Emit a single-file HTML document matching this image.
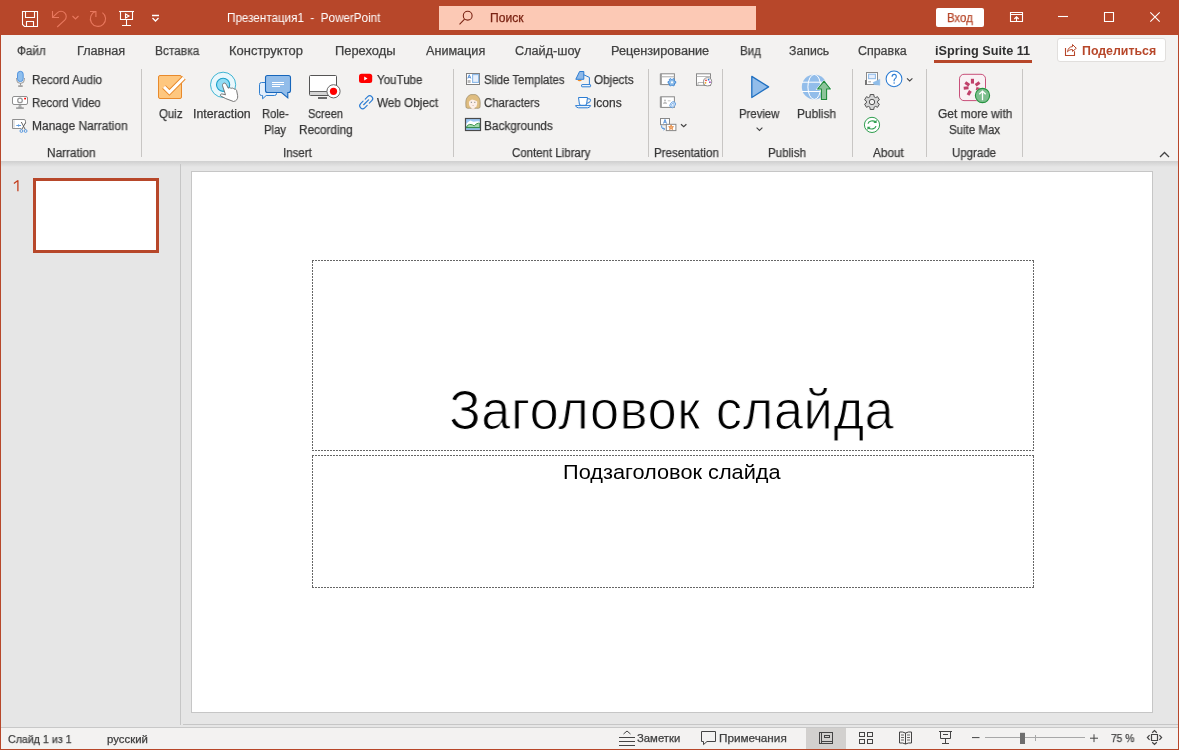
<!DOCTYPE html>
<html><head><meta charset="utf-8">
<style>
*{margin:0;padding:0;box-sizing:border-box}
html,body{width:1179px;height:750px;overflow:hidden}
body{position:relative;background:#b7472a;font-family:"Liberation Sans",sans-serif}
.a{position:absolute}
.t{position:absolute;white-space:pre;transform-origin:0 0;will-change:transform;font-family:"Liberation Sans",sans-serif}
svg{position:absolute;overflow:visible}
</style></head><body>
<!-- ribbon bg -->
<div class="a" style="left:1px;top:35px;width:1177px;height:126px;background:#f3f2f1"></div>
<!-- work area -->
<div class="a" style="left:1px;top:161px;width:1177px;height:566px;background:#e6e6e6"></div>
<div class="a" style="left:1px;top:161px;width:1177px;height:6px;background:linear-gradient(#cfcfcf,#e6e6e6)"></div>
<!-- thumb divider -->
<div class="a" style="left:180px;top:164px;width:1px;height:561px;background:#c6c6c6"></div>
<!-- slide -->
<div class="a" style="left:191px;top:171px;width:962px;height:542px;background:#fff;border:1px solid #c6c6c6"></div>
<div class="a" style="left:183px;top:724px;width:995px;height:1px;background:#c6c6c6"></div>
<!-- placeholders -->
<svg style="left:0;top:0" width="1179" height="750" fill="none"><g stroke="#666" stroke-width="1" stroke-dasharray="2 1"><path d="M312 260.5 H1034 M312 450.5 H1034 M312.5 261 V451 M1033.5 261 V451 M312 455.5 H1034 M312 587.5 H1034 M312.5 456 V588 M1033.5 456 V588"/></g></svg>

<!-- thumbnail -->
<div class="a" style="left:33px;top:178px;width:126px;height:75px;border:3px solid #b7472a;background:#fff"></div>
<!-- status bar -->
<div class="a" style="left:1px;top:727px;width:1177px;height:1px;background:#c8c8c8"></div>
<div class="a" style="left:1px;top:728px;width:1177px;height:21px;background:#f3f2f1"></div>
<div class="a" style="left:806px;top:728px;width:40px;height:21px;background:#d2d0ce"></div>
<!-- search -->
<div class="a" style="left:439px;top:6px;width:317px;height:24px;background:#fcc9b5"></div>
<!-- Вход -->
<div class="a" style="left:936px;top:8px;width:48px;height:19px;background:#fff;border-radius:2px"></div>
<!-- share button -->
<div class="a" style="left:1057px;top:38px;width:109px;height:24px;background:#fff;border:1px solid #e1dfdd;border-radius:3px"></div>
<!-- tab underline -->
<div class="a" style="left:934px;top:60px;width:98px;height:3px;background:#b7472a"></div>
<!-- separators -->
<div class="a" style="left:141px;top:69px;width:1px;height:88px;background:#c8c6c4"></div>
<div class="a" style="left:453px;top:69px;width:1px;height:88px;background:#c8c6c4"></div>
<div class="a" style="left:648px;top:69px;width:1px;height:88px;background:#c8c6c4"></div>
<div class="a" style="left:722px;top:69px;width:1px;height:88px;background:#c8c6c4"></div>
<div class="a" style="left:852px;top:69px;width:1px;height:88px;background:#c8c6c4"></div>
<div class="a" style="left:926px;top:69px;width:1px;height:88px;background:#c8c6c4"></div>
<div class="a" style="left:1022px;top:69px;width:1px;height:88px;background:#c8c6c4"></div>
<!--ICONS--><svg style="left:0;top:0" width="1179" height="750" viewBox="0 0 1179 750" fill="none">
<!-- title bar -->
<g stroke="#fff" stroke-width="1.1">
 <path d="M22.5 11.5 H37.5 V26.5 H24.5 L22.5 24.5 Z"/>
 <path d="M25.5 11.5 V17.5 H34.5 V11.5"/>
 <path d="M26.5 26.5 V21.5 H33.5 V26.5"/>
 <path d="M119 11.5 H134"/>
 <path d="M120.5 11.5 V19.5 H132.5 V11.5"/>
 <path d="M125.5 14 V18 L129 16 Z"/>
 <path d="M126.5 19.5 V25.5 M122 25.5 H131"/>
 <path d="M152 15.5 H159 M152.5 18 L155.5 21 L158.5 18" stroke-width="1.3"/>
 <path d="M1010.5 12.5 H1022.5 V21.5 H1010.5 Z M1010.5 14.5 H1022.5 M1016.5 21.5 V16.8 M1014.3 19 L1016.5 16.8 L1018.7 19"/>
 <path d="M1058 16.5 H1068"/>
 <path d="M1104.5 12.5 H1113.5 V21.5 H1104.5 Z"/>
 <path d="M1150.3 12.3 L1159.7 21.7 M1159.7 12.3 L1150.3 21.7"/>
</g>
<g stroke="#e8785e" stroke-width="1.1">
 <path d="M52.5 11 V17.5 H59"/>
 <path d="M52.8 17.2 L57.3 12.8 A5.2 5.2 0 0 1 64.7 20.2 L57.2 27"/>
 <path d="M72.5 16 L75.5 19 L78.5 16"/>
 <path d="M90 11.5 H95.9 V17"/>
 <path d="M95.5 11.6 A7.6 7.6 0 1 0 102.4 12.6"/>
</g>
<!-- search -->
<g stroke="#7a2414" stroke-width="1.1">
 <circle cx="467.7" cy="15.7" r="4.4"/>
 <path d="M459.5 24.3 L464.6 19.2"/>
</g>
<!-- share -->
<g stroke="#b7472a" stroke-width="1.1">
 <path d="M1065.5 48 V55.5 H1074.5 V51.3"/>
 <path d="M1067.5 51.8 C1068 48.3 1070 46.6 1072.5 46.6 V44.5 L1076.3 48.3 L1072.5 51.4 V49.6 C1070.5 49.4 1069 50.1 1067.5 51.8 Z" stroke-width="1"/>
</g>
<!-- collapse -->
<path d="M1160 157 L1164.5 152.5 L1169 157" stroke="#444" stroke-width="1.3"/>

<!-- Narration icons -->
<g>
 <path d="M16.6 78 V79.5 A3.5 3.5 0 0 0 24.4 79.5 V78" stroke="#999" stroke-width="1"/>
 <path d="M20.5 83 V85.5" stroke="#999" stroke-width="1"/>
 <rect x="18.2" y="85.3" width="4.5" height="1.6" fill="#999"/>
 <rect x="17.5" y="71.3" width="5.7" height="10.3" rx="2.85" fill="#8fbfee" stroke="#4a8fdc" stroke-width="0.9"/>
 <rect x="12.5" y="96.5" width="15" height="8" rx="1.5" fill="#fff" stroke="#8f8f8f" stroke-width="1"/>
 <circle cx="20" cy="100.4" r="2.3" fill="#fff" stroke="#999" stroke-width="1.3"/>
 <rect x="24.2" y="97.8" width="1.8" height="1.6" fill="#f00"/>
 <path d="M19.3 105 L18.6 107.5 H21.4 L20.7 105 Z" fill="#bbb" stroke="#999" stroke-width="0.6"/>
 <rect x="16.1" y="107.4" width="7.7" height="1.4" fill="#8f8f8f"/>
 <rect x="13" y="120" width="12" height="8" fill="#fff"/>
 <path d="M25.5 123.5 V121 Q25.5 119.5 24 119.5 H12.5 V128.5 H21.2" stroke="#8f8f8f" stroke-width="1"/>
 <rect x="13.2" y="120.2" width="1.6" height="7.6" fill="#ddd"/>
 <path d="M16.3 125.5 H21 M18.6 124.3 V126.7" stroke="#5c9be0" stroke-width="1"/>
 <path d="M21.3 122 L25.3 129.6 M25.6 122.6 L21.7 129.6" stroke="#555" stroke-width="0.9"/>
 <circle cx="21.4" cy="131" r="1.4" stroke="#5c9be0" stroke-width="1"/>
 <circle cx="25.6" cy="131" r="1.4" stroke="#5c9be0" stroke-width="1"/>
</g>
<!-- Quiz -->
<rect x="158.5" y="75.5" width="23" height="23" rx="1.5" fill="#fec77f" stroke="#e88a2c" stroke-width="1"/>
<path d="M164 86.9 L169.4 92.3 L183.9 77.8" stroke="#e88a2c" stroke-width="5" stroke-linejoin="miter" stroke-linecap="butt"/>
<path d="M164 86.9 L169.4 92.3 L183.9 77.8" stroke="#fff" stroke-width="3" stroke-linecap="butt"/>
<!-- Interaction -->
<circle cx="223.1" cy="84.8" r="12.6" fill="#e9f7fc" stroke="#3fb5d3" stroke-width="1"/>
<circle cx="223.1" cy="84.8" r="6.6" fill="#92dcf4" stroke="#1ba0c9" stroke-width="1.1"/>
<path d="M223.2 83.5 C224.5 82.5 225.8 83.3 226.5 84.8 L228.2 88.2 C229.2 87.3 230.2 87.6 231 88.5 C232 87.7 233.5 88 234.1 89.2 C235 88.8 236.2 89.3 236.6 90.5 L237.6 95.5 C238 97.5 237.3 99.8 235.6 100.8 L233.5 101.5 L225.8 98.6 L220.8 96 C220 95.3 220.5 93.8 221.8 93.9 L225.5 94.8 L222.6 86 C222.3 85 222.6 84 223.2 83.5 Z" fill="#fff" stroke="#6a6a6a" stroke-width="0.9"/>
<!-- Role-Play -->
<path d="M261.5 82.5 H274.5 Q276.5 82.5 276.5 84.5 V93.5 Q276.5 95.5 274.5 95.5 H266.2 L262.6 98.8 V95.5 H261.5 Q259.5 95.5 259.5 93.5 V84.5 Q259.5 82.5 261.5 82.5 Z" fill="#e4effb" stroke="#2f7fd0" stroke-width="1"/>
<path d="M267.5 75.5 H288.5 Q290.5 75.5 290.5 77.5 V90.5 Q290.5 92.5 288.5 92.5 H287.8 V97.8 L281.5 92.5 H267.5 Q265.5 92.5 265.5 90.5 V77.5 Q265.5 75.5 267.5 75.5 Z" fill="#92bdea" stroke="#1766bb" stroke-width="1.1"/>
<path d="M272 82.5 H284 M272 84.5 H284 M272 86.5 H280" stroke="#fff" stroke-width="1"/>
<!-- Screen Recording -->
<rect x="309.5" y="75.5" width="27" height="20" rx="1" fill="#fff" stroke="#555" stroke-width="1"/>
<rect x="310" y="91.5" width="26" height="3.5" fill="#d5d5d5"/>
<path d="M310 91.5 H336" stroke="#666" stroke-width="1"/>
<rect x="318" y="97" width="9" height="2" fill="#6a6a6a"/>
<circle cx="333.5" cy="91.3" r="6.6" fill="#fff" stroke="#666" stroke-width="1"/>
<circle cx="333.5" cy="91.3" r="3.6" fill="#f00"/>
<!-- YouTube -->
<rect x="359" y="73.8" width="13.2" height="9.3" rx="2.5" fill="#f00"/>
<path d="M364.2 76.6 V80.4 L367.5 78.5 Z" fill="#fff"/>
<!-- link -->
<g transform="translate(366.2 102.2) rotate(-45)" stroke="#2b7cd3" stroke-width="1.15" fill="none" stroke-linecap="round">
 <path d="M1.5 -2.9 H5 A2.9 2.9 0 0 1 5 2.9 H1.5"/>
 <path d="M-1.5 2.9 H-5 A2.9 2.9 0 0 1 -5 -2.9 H-1.5"/>
 <path d="M-3.6 0 H3.4"/>
</g>
<!-- Slide templates -->
<rect x="466.5" y="73.5" width="13" height="11" fill="#fff" stroke="#808080" stroke-width="1"/>
<rect x="472.6" y="74.6" width="6" height="7.8" fill="#e8f0fc" stroke="#8ab8e8" stroke-width="1.1"/>
<path d="M467.8 78.5 L469.3 74.8 L470.8 78.5 M468.3 77.3 H470.3" stroke="#3a7ed0" stroke-width="0.8"/>
<rect x="467.6" y="80" width="3" height="3" fill="#bbb"/>
<!-- Characters -->
<path d="M470.8 94.6 H475.4 Q477.5 95 479.2 98 Q480.3 100 480.2 103 L480 107.5 Q478.5 108.6 476.5 108.3 H469.5 Q467.5 108.6 466 107.5 L465.8 103 Q465.7 100 466.8 98 Q468.5 95 470.8 94.6 Z" fill="#dfbd80" stroke="#9a8a6a" stroke-width="0.7"/>
<path d="M471.5 108 V109.6 H474.5 V108 Z" fill="#f5e2d8"/>
<path d="M472 99.5 Q475 99.8 477.2 101.5 Q477.5 104 476.5 106.2 Q475 108.3 473 108.3 Q470.6 108.2 469.5 106 Q468.6 104 469 101.8 Q469.8 100.5 472 99.5 Z" fill="#fcefe8"/>
<path d="M470.8 102.3 h1.2 M474.2 102.3 h1.2" stroke="#888" stroke-width="1"/>
<path d="M472.5 105.5 h1.2" stroke="#c9a9a0" stroke-width="0.7"/>
<!-- Backgrounds -->
<rect x="465.5" y="118.5" width="15" height="12" fill="#9cc8f5"/>
<path d="M466.2 126 V123.8 Q468 121.8 470.5 120.4 Q472 121.2 473.6 121.7 Q476.5 120.9 479.8 121.4 V126 Z" fill="#fff"/>
<path d="M466.4 127.6 Q467.2 124.6 469.6 124.4 Q472.4 124.3 474.3 125.9 Q476 123.3 478.5 123.2 Q479.4 123.2 479.8 123.4 V127.6 Z" fill="#a3d8ab" stroke="#2e8b45" stroke-width="0.9"/>
<path d="M466 127.9 H480" stroke="#2e8b45" stroke-width="1"/>
<rect x="466" y="128.4" width="14" height="1.8" fill="#96c3f5"/>
<rect x="465.5" y="118.5" width="15" height="12" fill="none" stroke="#4a4a4a" stroke-width="1.2"/>
<!-- Objects lamp -->
<path d="M575.8 79.3 L579.6 71.5 H583.8 V79.3 Z" fill="#8db8e8" stroke="#2b7cd3" stroke-width="1" stroke-linejoin="round"/>
<path d="M577.5 80 A2.2 1.6 0 0 0 581.8 80 Z" fill="#f08a24"/>
<path d="M583.8 74.8 L589.4 77.4 V84.8" stroke="#2b7cd3" stroke-width="1"/>
<rect x="581.6" y="84.6" width="9" height="2.2" rx="0.5" fill="#fff" stroke="#2b7cd3" stroke-width="1"/>
<!-- Icons cup -->
<path d="M578.5 97.5 H587.5 L586.6 104 Q586.3 105.3 585 105.3 H581 Q579.7 105.3 579.4 104 Z" fill="#fff" stroke="#2b7cd3" stroke-width="1"/>
<path d="M587.3 98.8 H589 Q590.6 98.8 590.6 100.3 Q590.6 102.6 586.8 103.4" stroke="#2b7cd3" stroke-width="1"/>
<path d="M575.5 105.6 H590.6 Q589.8 107.8 587.5 107.8 H578.6 Q576.3 107.8 575.5 105.6 Z" fill="#fff" stroke="#2b7cd3" stroke-width="1"/>
<!-- Presentation icons -->
<g>
 <rect x="660.8" y="73.8" width="13.6" height="10.8" fill="#fff" stroke="#888" stroke-width="1"/>
 <path d="M660.8 73.8 V84.6" stroke="#999" stroke-width="2"/>
 <path d="M661 76.8 H674.4" stroke="#aaa" stroke-width="1"/>
 <path d="M674.61 81.28 L675.71 81.45 L675.71 83.15 L674.61 83.32 L674.14 84.14 L674.54 85.17 L673.07 86.02 L672.37 85.16 L671.43 85.16 L670.73 86.02 L669.26 85.17 L669.66 84.14 L669.19 83.32 L668.09 83.15 L668.09 81.45 L669.19 81.28 L669.66 80.46 L669.26 79.43 L670.73 78.58 L671.43 79.44 L672.37 79.44 L673.07 78.58 L674.54 79.43 L674.14 80.46 Z" fill="#8fbde9" stroke="#3b86d6" stroke-width="0.9" stroke-linejoin="round"/>
 <circle cx="672" cy="82.3" r="1.1" fill="#fff"/>
 <rect x="696.5" y="73.8" width="14" height="11.6" fill="#fff" stroke="#888" stroke-width="1"/>
 <path d="M696.5 76.5 H710.5 M698 82.5 H703.5 V85.4 H698 Z" stroke="#aaa" stroke-width="0.8"/>
 <circle cx="707.6" cy="81.8" r="4.1" fill="#fff" stroke="#777" stroke-width="0.8"/>
 <circle cx="706" cy="80.3" r="0.9" fill="#e33"/>
 <circle cx="708.6" cy="79.7" r="0.9" fill="#2a7ad0"/>
 <circle cx="709.9" cy="82.2" r="0.9" fill="#a040c0"/>
 <circle cx="705.5" cy="82.8" r="0.9" fill="#f0a020"/>
 <rect x="660.8" y="96.8" width="13.6" height="10.6" fill="#fff" stroke="#888" stroke-width="1"/>
 <path d="M660.8 96.8 V107.4" stroke="#999" stroke-width="2"/>
 <circle cx="665" cy="100.4" r="1" fill="#bbb"/>
 <path d="M663.3 103.3 Q665 101.3 666.8 103.3 Z M667.8 100.8 H670.5" stroke="#bbb" stroke-width="0.9" fill="#bbb"/>
 <ellipse cx="672.7" cy="104.7" rx="2.4" ry="3.3" transform="rotate(40 672.7 104.7)" fill="#fff" stroke="#4a90dc" stroke-width="0.8"/>
 <ellipse cx="672.7" cy="104.7" rx="1" ry="2" transform="rotate(40 672.7 104.7)" stroke="#4a90dc" stroke-width="0.6"/>
 <rect x="660.5" y="118.5" width="9" height="6.2" fill="#fff" stroke="#888" stroke-width="1"/>
 <path d="M663.5 123.5 L665 119.5 L666.5 123.5 M664 122.2 H666" stroke="#3a7ed0" stroke-width="0.8"/>
 <rect x="666.3" y="124.3" width="9.6" height="6.3" fill="#fff" stroke="#888" stroke-width="1"/>
 <path d="M671.10 124.90 L671.75 126.61 L673.57 126.70 L672.15 127.84 L672.63 129.60 L671.10 128.60 L669.57 129.60 L670.05 127.84 L668.63 126.70 L670.45 126.61 Z" fill="#f3b27a" stroke="#e0782a" stroke-width="0.7" stroke-linejoin="round"/>
 <path d="M661.5 125.5 Q661 129 664.5 129 M663.5 128 L664.7 129 L663.5 130" stroke="#3b86d6" stroke-width="0.9"/>
 <path d="M681 124.3 L683.7 126.8 L686.4 124.3" stroke="#444" stroke-width="1.2"/>
</g>
<!-- Preview -->
<path d="M751.8 76.4 L768.6 86.9 L751.8 97.5 Z" fill="#92bdea" stroke="#1f6fc0" stroke-width="1.3" stroke-linejoin="round"/>
<path d="M756.6 127.6 L759.5 130.5 L762.4 127.6" stroke="#444" stroke-width="1.1"/>
<!-- Publish -->
<circle cx="814.3" cy="86.9" r="12.5" fill="#92bdea"/>
<ellipse cx="814.3" cy="86.9" rx="6.4" ry="12.5" stroke="#fff" stroke-width="1"/>
<path d="M801.8 82.2 H826.8 M801.8 91.5 H826.8" stroke="#fff" stroke-width="1"/>
<path d="M824 79.8 L832.3 89.8 H827.3 V100.3 H820.7 V89.8 H815.7 Z" fill="#fff"/>
<path d="M824 81.2 L830.4 89 H826.6 V99.5 H821.4 V89 H817.6 Z" fill="#8cc49a" stroke="#1e8a3a" stroke-width="1.1" stroke-linejoin="round"/>
<!-- About icons -->
<rect x="866.5" y="72.5" width="11" height="12" fill="#fff" stroke="#8a8a8a" stroke-width="1"/>
<path d="M865.8 80 V85" stroke="#666" stroke-width="1.4"/>
<rect x="868.6" y="74.2" width="6.8" height="4.5" fill="#e6eefc" stroke="#8ab8e8" stroke-width="1"/>
<path d="M868.3 81.8 H871" stroke="#aaa" stroke-width="1.2"/>
<path d="M873 82.6 L879.8 79.3 V85.2 L874 84.4 Z" fill="#8fbde9" stroke="#8fbde9" stroke-width="0.5"/>
<circle cx="894" cy="78.9" r="7.9" fill="#fff" stroke="#2b7cd3" stroke-width="1.05"/>
<path d="M907 78.3 L909.7 80.9 L912.4 78.3" stroke="#444" stroke-width="1.1"/>
<path d="M869.99 96.67 L870.17 94.52 L873.83 94.52 L874.01 96.67 L875.62 97.59 L877.56 96.68 L879.39 99.85 L877.62 101.07 L877.62 102.93 L879.39 104.15 L877.56 107.32 L875.62 106.41 L874.01 107.33 L873.83 109.48 L870.17 109.48 L869.99 107.33 L868.38 106.41 L866.44 107.32 L864.61 104.15 L866.38 102.93 L866.38 101.07 L864.61 99.85 L866.44 96.68 L868.38 97.59 Z" fill="#d6d6d6" stroke="#555" stroke-width="1" stroke-linejoin="round"/>
<circle cx="872" cy="102" r="2.7" fill="#f3f2f1" stroke="#555" stroke-width="1"/>
<circle cx="872" cy="124.9" r="7.6" fill="#fff" stroke="#2e9e4e" stroke-width="1"/>
<path d="M868 123.6 C868.8 120.8 873 120 875.6 121.8" stroke="#2e9e4e" stroke-width="1.2"/>
<path d="M876.6 119.8 V123 H873.4 Z" fill="#2e9e4e"/>
<path d="M876 126.2 C875.2 129 871 129.8 868.4 128" stroke="#2e9e4e" stroke-width="1.2"/>
<path d="M867.4 130 V126.8 H870.6 Z" fill="#2e9e4e"/>
<path d="M892.1 76.7 Q892.1 74.4 894.2 74.4 Q896.3 74.4 896.3 76.4 Q896.3 77.7 895.1 78.6 Q894.1 79.4 894.1 80.6 V81.2" stroke="#2b7cd3" stroke-width="1.1"/>
<circle cx="894.1" cy="83.1" r="0.75" fill="#2b7cd3"/>
<!-- Upgrade -->
<rect x="959.5" y="74.3" width="26" height="26.3" rx="4.5" fill="#f9f1f4" stroke="#c8507a" stroke-width="1"/>
<g fill="#c0406a">
 <rect x="970.9" y="78.8" width="3.1" height="4.8" transform="rotate(0 972.4 87.5)"/>
 <rect x="970.9" y="78.8" width="3.1" height="4.8" transform="rotate(55 972.4 87.5)"/>
 <rect x="970.9" y="78.8" width="3.1" height="4.8" transform="rotate(-55 972.4 87.5)"/>
 <rect x="970.9" y="78.8" width="3.1" height="4.8" transform="rotate(-95 972.4 87.5)"/>
 <rect x="970.9" y="78.8" width="3.1" height="4.8" transform="rotate(-150 972.4 87.5)"/>
 <rect x="970.9" y="78.8" width="3.1" height="4.8" transform="rotate(105 972.4 87.5)"/>
</g>
<circle cx="982.5" cy="95.5" r="7.8" fill="#f3f2f1"/>
<circle cx="982.5" cy="95.5" r="7.1" fill="#7dbe8e" stroke="#24933f" stroke-width="1.1"/>
<path d="M982.5 100.3 V91.3 M979.3 94.3 L982.5 91.1 L985.7 94.3" stroke="#fff" stroke-width="1.3"/>
<path d="M17.9 180.3 V191.2 M17.9 180.6 L13.9 183.6" stroke="#c43e1c" stroke-width="1.3"/>
<!-- status bar icons -->
<g stroke="#444" stroke-width="1">
 <path d="M619 737.5 H635 M619 741.5 H635 M619 745.5 H635"/>
 <path d="M623.5 734 L627 731 L630.5 734"/>
 <path d="M701.5 731.5 H715.5 V741.5 H707 L703.5 744.6 V741.5 H701.5 Z"/>
 <rect x="819.5" y="732.5" width="13" height="11"/>
 <path d="M821.5 732.5 V743.5 M821.5 741.5 H832.5"/>
 <rect x="824.5" y="735.5" width="5" height="2"/>
 <rect x="859.5" y="732.5" width="5" height="4"/>
 <rect x="867.5" y="732.5" width="5" height="4"/>
 <rect x="859.5" y="739.5" width="5" height="4"/>
 <rect x="867.5" y="739.5" width="5" height="4"/>
 <path d="M905.5 733 Q902.5 731.5 899.5 732 V743 Q902.5 742.5 905.5 744 Q908.5 742.5 911.5 743 V732 Q908.5 731.5 905.5 733 Z M905.5 733 V744"/>
 <path d="M901 735 H904 M901 737.5 H904 M901 740 H904 M907 735 H910 M907 737.5 H910 M907 740 H910" stroke-width="0.8"/>
 <path d="M939 731.5 H952 M940.5 731.5 V738.5 H950.5 V731.5 M945.5 738.5 V743.5 M942 743.5 H949 M943 734.5 H948"/>
 <path d="M972 737.6 H979.5"/>
 <path d="M1090 738.2 H1098 M1094 734.3 V742.1"/>
 <path d="M1151.5 734.5 H1157.5 V740.5 H1151.5 Z" stroke-width="1.2"/>
 <path d="M1152.2 732.8 L1154.5 730.6 L1156.8 732.8 M1152.2 742.2 L1154.5 744.4 L1156.8 742.2 M1149.6 735.2 L1147.4 737.5 L1149.6 739.8 M1159.4 735.2 L1161.6 737.5 L1159.4 739.8" stroke-width="1.2"/>
</g>
<path d="M985 737.5 H1085" stroke="#a8a8a8" stroke-width="1"/>
<path d="M1035.5 735 V741" stroke="#a8a8a8" stroke-width="1"/>
<rect x="1020" y="732.8" width="5" height="11.2" fill="#6e6e6e"/>
</svg>
<!--/ICONS-->
<div class="t" style="left:226.80px;top:11.84px;font-size:12px;line-height:12px;color:#ffffff;font-weight:normal;transform:scaleX(0.9715);letter-spacing:0px;">Презентация1&nbsp;&nbsp;-&nbsp;&nbsp;PowerPoint</div>
<div class="t" style="left:489.80px;top:11.84px;font-size:12px;line-height:12px;color:#7a2414;font-weight:normal;transform:scaleX(1.0058);letter-spacing:0px;-webkit-text-stroke:0.25px #7a2414;">Поиск</div>
<div class="t" style="left:947.00px;top:11.84px;font-size:12px;line-height:12px;color:#b7472a;font-weight:normal;transform:scaleX(0.9468);letter-spacing:0px;-webkit-text-stroke:0.25px #b7472a;">Вход</div>
<div class="t" style="left:17.00px;top:44.54px;font-size:12px;line-height:12px;color:#424242;font-weight:normal;transform:scaleX(0.9763);letter-spacing:0px;-webkit-text-stroke:0.25px #424242;">Файл</div>
<div class="t" style="left:77.00px;top:44.54px;font-size:12px;line-height:12px;color:#424242;font-weight:normal;transform:scaleX(1.0559);letter-spacing:0px;-webkit-text-stroke:0.25px #424242;">Главная</div>
<div class="t" style="left:155.20px;top:44.54px;font-size:12px;line-height:12px;color:#424242;font-weight:normal;transform:scaleX(0.9905);letter-spacing:0px;-webkit-text-stroke:0.25px #424242;">Вставка</div>
<div class="t" style="left:229.00px;top:44.54px;font-size:12px;line-height:12px;color:#424242;font-weight:normal;transform:scaleX(1.0793);letter-spacing:0px;-webkit-text-stroke:0.25px #424242;">Конструктор</div>
<div class="t" style="left:334.50px;top:44.54px;font-size:12px;line-height:12px;color:#424242;font-weight:normal;transform:scaleX(1.0744);letter-spacing:0px;-webkit-text-stroke:0.25px #424242;">Переходы</div>
<div class="t" style="left:426.00px;top:44.54px;font-size:12px;line-height:12px;color:#424242;font-weight:normal;transform:scaleX(1.0513);letter-spacing:0px;-webkit-text-stroke:0.25px #424242;">Анимация</div>
<div class="t" style="left:515.20px;top:44.54px;font-size:12px;line-height:12px;color:#424242;font-weight:normal;transform:scaleX(1.0545);letter-spacing:0px;-webkit-text-stroke:0.25px #424242;">Слайд-шоу</div>
<div class="t" style="left:611.10px;top:44.54px;font-size:12px;line-height:12px;color:#424242;font-weight:normal;transform:scaleX(1.0593);letter-spacing:0px;-webkit-text-stroke:0.25px #424242;">Рецензирование</div>
<div class="t" style="left:740.10px;top:44.54px;font-size:12px;line-height:12px;color:#424242;font-weight:normal;transform:scaleX(0.9628);letter-spacing:0px;-webkit-text-stroke:0.25px #424242;">Вид</div>
<div class="t" style="left:789.20px;top:44.54px;font-size:12px;line-height:12px;color:#424242;font-weight:normal;transform:scaleX(1.0224);letter-spacing:0px;-webkit-text-stroke:0.25px #424242;">Запись</div>
<div class="t" style="left:857.50px;top:44.54px;font-size:12px;line-height:12px;color:#424242;font-weight:normal;transform:scaleX(1.0359);letter-spacing:0px;-webkit-text-stroke:0.25px #424242;">Справка</div>
<div class="t" style="left:934.50px;top:44.54px;font-size:12px;line-height:12px;color:#303030;font-weight:bold;transform:scaleX(1.0570);letter-spacing:0px;">iSpring Suite 11</div>
<div class="t" style="left:1081.70px;top:44.64px;font-size:12px;line-height:12px;color:#b7472a;font-weight:bold;transform:scaleX(1.0303);letter-spacing:0px;">Поделиться</div>
<div class="t" style="left:31.80px;top:73.84px;font-size:12px;line-height:12px;color:#383838;font-weight:normal;transform:scaleX(0.9735);letter-spacing:0px;-webkit-text-stroke:0.25px #383838;">Record Audio</div>
<div class="t" style="left:31.80px;top:96.84px;font-size:12px;line-height:12px;color:#383838;font-weight:normal;transform:scaleX(0.9476);letter-spacing:0px;-webkit-text-stroke:0.25px #383838;">Record Video</div>
<div class="t" style="left:31.80px;top:119.94px;font-size:12px;line-height:12px;color:#383838;font-weight:normal;transform:scaleX(0.9950);letter-spacing:0px;-webkit-text-stroke:0.25px #383838;">Manage Narration</div>
<div class="t" style="left:46.60px;top:146.84px;font-size:12px;line-height:12px;color:#383838;font-weight:normal;transform:scaleX(0.9840);letter-spacing:0px;-webkit-text-stroke:0.25px #383838;">Narration</div>
<div class="t" style="left:159.30px;top:107.84px;font-size:12px;line-height:12px;color:#383838;font-weight:normal;transform:scaleX(0.9524);letter-spacing:0px;-webkit-text-stroke:0.25px #383838;">Quiz</div>
<div class="t" style="left:193.47px;top:107.84px;font-size:12px;line-height:12px;color:#383838;font-weight:normal;transform:scaleX(1.0283);letter-spacing:0px;-webkit-text-stroke:0.25px #383838;">Interaction</div>
<div class="t" style="left:261.70px;top:107.84px;font-size:12px;line-height:12px;color:#383838;font-weight:normal;transform:scaleX(0.9310);letter-spacing:0px;-webkit-text-stroke:0.25px #383838;">Role-</div>
<div class="t" style="left:264.00px;top:123.94px;font-size:12px;line-height:12px;color:#383838;font-weight:normal;transform:scaleX(0.9424);letter-spacing:0px;-webkit-text-stroke:0.25px #383838;">Play</div>
<div class="t" style="left:308.00px;top:107.84px;font-size:12px;line-height:12px;color:#383838;font-weight:normal;transform:scaleX(0.9211);letter-spacing:0px;-webkit-text-stroke:0.25px #383838;">Screen</div>
<div class="t" style="left:298.50px;top:123.94px;font-size:12px;line-height:12px;color:#383838;font-weight:normal;transform:scaleX(0.9829);letter-spacing:0px;-webkit-text-stroke:0.25px #383838;">Recording</div>
<div class="t" style="left:282.64px;top:146.84px;font-size:12px;line-height:12px;color:#383838;font-weight:normal;transform:scaleX(0.9569);letter-spacing:0px;-webkit-text-stroke:0.25px #383838;">Insert</div>
<div class="t" style="left:377.30px;top:73.84px;font-size:12px;line-height:12px;color:#383838;font-weight:normal;transform:scaleX(0.9625);letter-spacing:0px;-webkit-text-stroke:0.25px #383838;">YouTube</div>
<div class="t" style="left:377.30px;top:96.84px;font-size:12px;line-height:12px;color:#383838;font-weight:normal;transform:scaleX(0.9756);letter-spacing:0px;-webkit-text-stroke:0.25px #383838;">Web Object</div>
<div class="t" style="left:484.20px;top:73.84px;font-size:12px;line-height:12px;color:#383838;font-weight:normal;transform:scaleX(0.9539);letter-spacing:0px;-webkit-text-stroke:0.25px #383838;">Slide Templates</div>
<div class="t" style="left:484.20px;top:96.84px;font-size:12px;line-height:12px;color:#383838;font-weight:normal;transform:scaleX(0.9474);letter-spacing:0px;-webkit-text-stroke:0.25px #383838;">Characters</div>
<div class="t" style="left:484.20px;top:119.84px;font-size:12px;line-height:12px;color:#383838;font-weight:normal;transform:scaleX(0.9823);letter-spacing:0px;-webkit-text-stroke:0.25px #383838;">Backgrounds</div>
<div class="t" style="left:594.40px;top:73.84px;font-size:12px;line-height:12px;color:#383838;font-weight:normal;transform:scaleX(0.9734);letter-spacing:0px;-webkit-text-stroke:0.25px #383838;">Objects</div>
<div class="t" style="left:593.40px;top:96.84px;font-size:12px;line-height:12px;color:#383838;font-weight:normal;transform:scaleX(1.0007);letter-spacing:0px;-webkit-text-stroke:0.25px #383838;">Icons</div>
<div class="t" style="left:511.50px;top:146.84px;font-size:12px;line-height:12px;color:#383838;font-weight:normal;transform:scaleX(0.9556);letter-spacing:0px;-webkit-text-stroke:0.25px #383838;">Content Library</div>
<div class="t" style="left:653.50px;top:146.84px;font-size:12px;line-height:12px;color:#383838;font-weight:normal;transform:scaleX(0.9625);letter-spacing:0px;-webkit-text-stroke:0.25px #383838;">Presentation</div>
<div class="t" style="left:739.40px;top:107.84px;font-size:12px;line-height:12px;color:#383838;font-weight:normal;transform:scaleX(0.9439);letter-spacing:0px;-webkit-text-stroke:0.25px #383838;">Preview</div>
<div class="t" style="left:797.30px;top:107.84px;font-size:12px;line-height:12px;color:#383838;font-weight:normal;transform:scaleX(0.9901);letter-spacing:0px;-webkit-text-stroke:0.25px #383838;">Publish</div>
<div class="t" style="left:768.40px;top:146.84px;font-size:12px;line-height:12px;color:#383838;font-weight:normal;transform:scaleX(0.9642);letter-spacing:0px;-webkit-text-stroke:0.25px #383838;">Publish</div>
<div class="t" style="left:873.40px;top:146.84px;font-size:12px;line-height:12px;color:#383838;font-weight:normal;transform:scaleX(0.9805);letter-spacing:0px;-webkit-text-stroke:0.25px #383838;">About</div>
<div class="t" style="left:937.80px;top:108.04px;font-size:12px;line-height:12px;color:#383838;font-weight:normal;transform:scaleX(0.9957);letter-spacing:0px;-webkit-text-stroke:0.25px #383838;">Get more with</div>
<div class="t" style="left:949.10px;top:123.84px;font-size:12px;line-height:12px;color:#383838;font-weight:normal;transform:scaleX(0.9577);letter-spacing:0px;-webkit-text-stroke:0.25px #383838;">Suite Max</div>
<div class="t" style="left:952.30px;top:146.84px;font-size:12px;line-height:12px;color:#383838;font-weight:normal;transform:scaleX(0.9578);letter-spacing:0px;-webkit-text-stroke:0.25px #383838;">Upgrade</div>
<div class="t" style="left:449.05px;top:382.64px;font-size:55px;line-height:55px;color:#000000;font-weight:normal;transform:scaleX(0.9535);letter-spacing:0.6px;-webkit-text-stroke:1.1px #fff;">Заголовок слайда</div>
<div class="t" style="left:562.74px;top:461.65px;font-size:20.5px;line-height:20.5px;color:#000000;font-weight:normal;transform:scaleX(1.0607);letter-spacing:0px;">Подзаголовок слайда</div>
<div class="t" style="left:8.40px;top:733.69px;font-size:11px;line-height:11px;color:#404040;font-weight:normal;transform:scaleX(0.9692);letter-spacing:0px;-webkit-text-stroke:0.25px #404040;">Слайд 1 из 1</div>
<div class="t" style="left:106.50px;top:733.69px;font-size:11px;line-height:11px;color:#404040;font-weight:normal;transform:scaleX(1.0349);letter-spacing:0px;-webkit-text-stroke:0.25px #404040;">русский</div>
<div class="t" style="left:637.10px;top:733.29px;font-size:11px;line-height:11px;color:#404040;font-weight:normal;transform:scaleX(1.0280);letter-spacing:0px;-webkit-text-stroke:0.25px #404040;">Заметки</div>
<div class="t" style="left:718.80px;top:733.29px;font-size:11px;line-height:11px;color:#404040;font-weight:normal;transform:scaleX(1.0669);letter-spacing:0px;-webkit-text-stroke:0.25px #404040;">Примечания</div>
<div class="t" style="left:1111.40px;top:732.69px;font-size:11px;line-height:11px;color:#404040;font-weight:normal;transform:scaleX(0.9331);letter-spacing:0px;-webkit-text-stroke:0.25px #404040;">75 %</div>
</body></html>
